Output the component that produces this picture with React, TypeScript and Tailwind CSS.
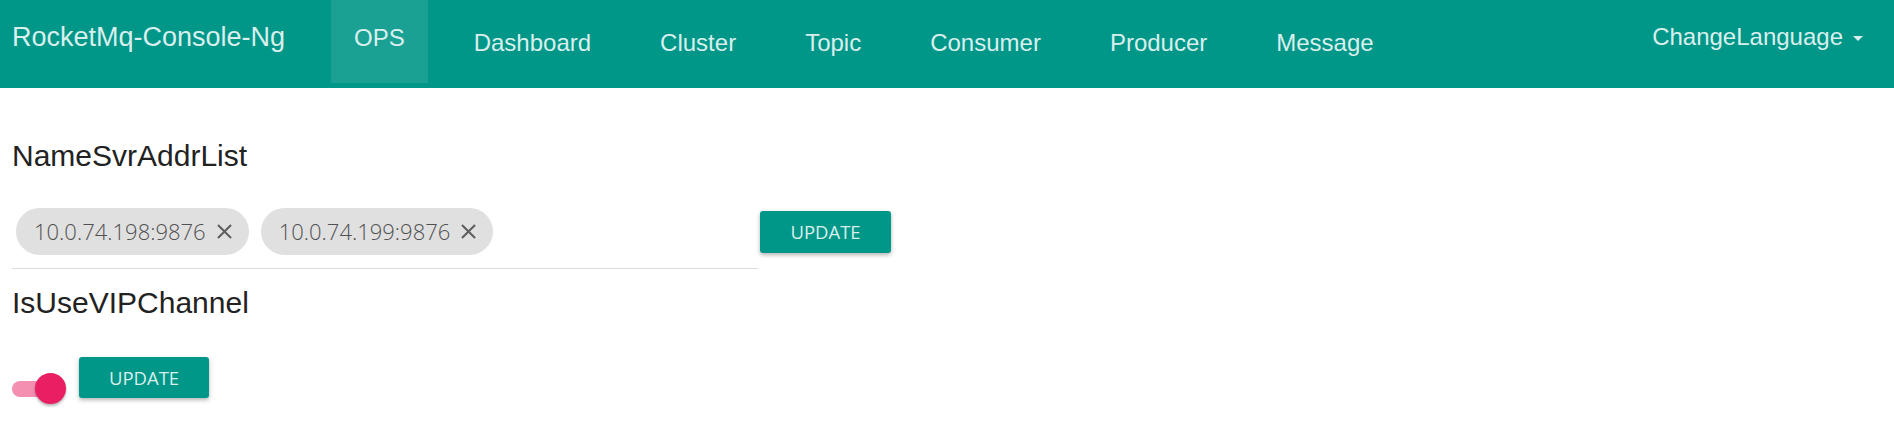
import { useState } from 'react';

const navItems = ['OPS', 'Dashboard', 'Cluster', 'Topic', 'Consumer', 'Producer', 'Message'];

const CloseIcon = () => (
    <svg width="25" height="25" viewBox="0 0 24 24" className="ml-[6px] shrink-0">
        <path
            fill="#5f5f5f"
            d="M19 6.41L17.59 5 12 10.59 6.41 5 5 6.41 10.59 12 5 17.59 6.41 19 12 13.41 17.59 19 19 17.59 13.41 12z"
        />
    </svg>
);

const UpdateButton = ({ className = '' }: { className?: string }) => (
    <button
        className={
            'flex items-center justify-center rounded-[3px] bg-[#009688] text-[#d9efed] text-[18.5px] font-["Open_Sans",sans-serif] shadow-[0_2px_4px_rgba(0,0,0,0.3)] ' +
            className
        }
    >
        UPDATE
    </button>
);

const App = () => {
    const [addrs] = useState(['10.0.74.198:9876', '10.0.74.199:9876']);

    return (
        <div className="w-full min-h-[426px] bg-white font-['Liberation_Sans',Arial,sans-serif]">
            <header className="flex items-start h-[88px] bg-[#009688] pl-[12px] text-[#d9efed]">
                <div className="w-[319px] pt-[21px] text-[27px] leading-[32px]">RocketMq-Console-Ng</div>
                <nav className="flex gap-[23px]">
                    {navItems.map((item) => (
                        <div
                            key={item}
                            className={
                                item === 'OPS'
                                    ? 'h-[83px] px-[23px] pt-[24px] text-[24px] leading-[28px] bg-[#1aa194]'
                                    : 'h-[83px] px-[23px] pt-[29px] text-[24px] leading-[28px]'
                            }
                        >
                            {item}
                        </div>
                    ))}
                </nav>
                <div className="ml-auto pr-[31px] pt-[23px] flex items-center gap-[10px] text-[24px] leading-[28px]">
                    <span>ChangeLanguage</span>
                    <span className="w-0 h-0 border-l-[5.5px] border-r-[5.5px] border-t-[5px] border-l-transparent border-r-transparent border-t-[#d9efed] mt-[3px]" />
                </div>
            </header>

            <main className="px-[12px] text-[#222222]">
                <h2 className="mt-[50px] text-[30px] leading-[36px]">NameSvrAddrList</h2>

                <div className="flex items-start mt-[30px]">
                    <div className="w-[746px] pt-[4px] pb-[13px] border-b border-[#dcdcdc] flex gap-[12px] pl-[4px]">
                        {addrs.map((a) => (
                            <div
                                key={a}
                                className="flex items-center h-[47px] rounded-full bg-[#e0e0e0] pl-[18px] pr-[12px] text-[22px] text-[#505050] font-['Open_Sans',sans-serif] font-light"
                            >
                                <span>{a}</span>
                                <CloseIcon />
                            </div>
                        ))}
                    </div>
                    <UpdateButton className="ml-[2px] mt-[7px] w-[131px] h-[42px]" />
                </div>

                <h2 className="mt-[16px] text-[30px] leading-[36px]">IsUseVIPChannel</h2>

                <div className="flex items-start mt-[36px]">
                    <div className="relative w-[54px] h-[31px] mt-[16px]">
                        <div className="absolute left-0 top-[8px] w-[46px] h-[16px] rounded-full bg-[#f48fb1]" />
                        <div className="absolute right-0 top-0 w-[31px] h-[31px] rounded-full bg-[#e91e63] shadow-[0_2px_3px_rgba(0,0,0,0.3)]" />
                    </div>
                    <UpdateButton className="ml-[13px] w-[130px] h-[41px]" />
                </div>
            </main>
        </div>
    );
};

export default App;
